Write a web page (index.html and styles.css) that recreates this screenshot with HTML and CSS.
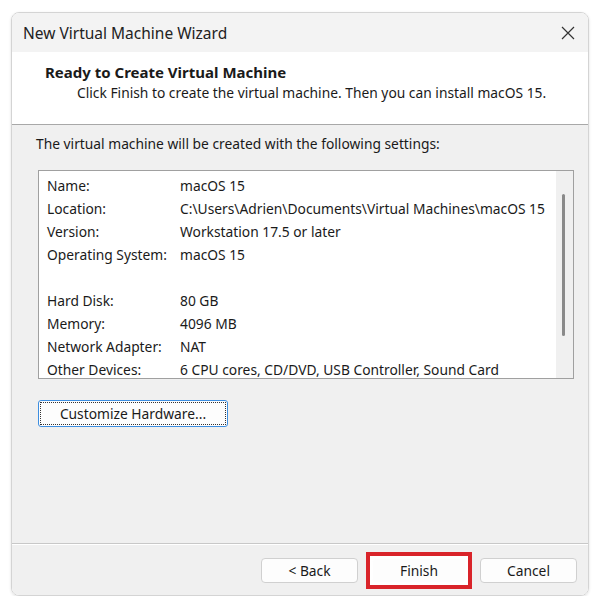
FILE: index.html
```html
<!DOCTYPE html>
<html lang="en">
<head>
<meta charset="UTF-8">
<title>New Virtual Machine Wizard</title>
<link rel="stylesheet" href="styles.css">
</head>
<body>
  <div class="dialog">
    <div class="titlebar">
      <span class="title">New Virtual Machine Wizard</span>
      <svg class="close" width="14" height="14" viewBox="0 0 14 14">
        <path d="M1 1 L13 13 M13 1 L1 13" stroke="#333" stroke-width="1.2" fill="none"/>
      </svg>
    </div>
    <div class="header">
      <div class="heading">Ready to Create Virtual Machine</div>
      <div class="subheading">Click Finish to create the virtual machine. Then you can install macOS 15.</div>
    </div>
    <div class="content">
      <p class="intro">The virtual machine will be created with the following settings:</p>
      <div class="listbox">
        <div class="rows">
          <div class="row"><span class="key">Name:</span><span>macOS 15</span></div>
          <div class="row"><span class="key">Location:</span><span>C:\Users\Adrien\Documents\Virtual Machines\macOS 15</span></div>
          <div class="row"><span class="key">Version:</span><span>Workstation 17.5 or later</span></div>
          <div class="row"><span class="key">Operating System:</span><span>macOS 15</span></div>
          <div class="row"></div>
          <div class="row"><span class="key">Hard Disk:</span><span>80 GB</span></div>
          <div class="row"><span class="key">Memory:</span><span>4096 MB</span></div>
          <div class="row"><span class="key">Network Adapter:</span><span>NAT</span></div>
          <div class="row"><span class="key">Other Devices:</span><span>6 CPU cores, CD/DVD, USB Controller, Sound Card</span></div>
        </div>
        <div class="scrollbar"><div class="thumb"></div></div>
      </div>
      <button class="btn customize"><span class="focus">Customize Hardware...</span></button>
    </div>
    <div class="footer">
      <button class="btn">&lt; Back</button>
      <div class="highlight"><button class="btn">Finish</button></div>
      <button class="btn">Cancel</button>
    </div>
  </div>
</body>
</html>
```

FILE: styles.css
```css
body {
  margin: 0;
  padding: 12px 11px 0 11px;
  background: #ffffff;
  font-family: "Noto Sans", "Open Sans", sans-serif;
  font-size: 13.8px;
  color: #1a1a1a;
}
.dialog {
  width: 576px;
  height: 582px;
  border: 1px solid #d4d4d4;
  border-radius: 8px;
  overflow: hidden;
  display: flex;
  flex-direction: column;
  box-shadow: 0 1px 3px rgba(0, 0, 0, 0.12);
}
.titlebar {
  height: 39px;
  background: #f3f3f3;
  display: flex;
  align-items: center;
  justify-content: space-between;
  padding: 0 13px 0 11px;
}
.title {
  font-size: 15.5px;
  color: #222;
}
.header {
  height: 73px;
  background: #ffffff;
  border-bottom: 1px solid #a8a8a8;
  box-sizing: border-box;
  padding: 10px 0 0 33px;
}
.heading {
  font-weight: bold;
  font-size: 15px;
  line-height: 20px;
}
.subheading {
  padding-left: 32px;
  line-height: 22px;
}
.content {
  flex: 1;
  background: #f0f0f0;
  padding: 0 14px 0 26px;
  border-bottom: 1px solid #c8c8c8;
}
.intro {
  margin: 9px 0 0 -2px;
  line-height: 20px;
}
.listbox {
  margin-top: 16px;
  height: 207px;
  border: 1px solid #a0a0a0;
  background: #ffffff;
  display: flex;
}
.rows {
  flex: 1;
  padding: 3px 0 0 8px;
}
.row {
  display: flex;
  height: 23px;
  line-height: 23px;
}
.key {
  width: 133px;
}
.scrollbar {
  width: 17px;
  background: #f0f0f0;
  display: flex;
  justify-content: center;
  padding: 23px 3px 0 0;
  box-sizing: border-box;
}
.thumb {
  width: 3px;
  height: 142px;
  background: #8a8a8a;
  border-radius: 2px;
}
.btn {
  font-family: inherit;
  font-size: 13.8px;
  color: #1a1a1a;
  background: #fdfdfd;
  border: 1px solid #d0d0d0;
  border-radius: 4px;
  height: 25px;
  width: 97px;
  padding: 0;
}
.customize {
  margin-top: 21px;
  width: 190px;
  height: 27px;
  border: 1px solid #3d8ee0;
  border-radius: 3px;
  padding: 1px;
}
.customize .focus {
  display: block;
  height: 100%;
  box-sizing: border-box;
  border: 1px dotted #333;
  line-height: 21px;
}
.footer {
  height: 50px;
  background: #f0f0f0;
  border-top: 1px solid #ffffff;
  display: flex;
  align-items: center;
  justify-content: flex-end;
  padding-right: 11px;
  gap: 8px;
}
.highlight {
  border: 4px solid #d9242a;
  padding: 2px 2px;
  background: #ffffff;
}
.highlight .btn {
  width: 94px;
  border-color: #ffffff;
}
```
